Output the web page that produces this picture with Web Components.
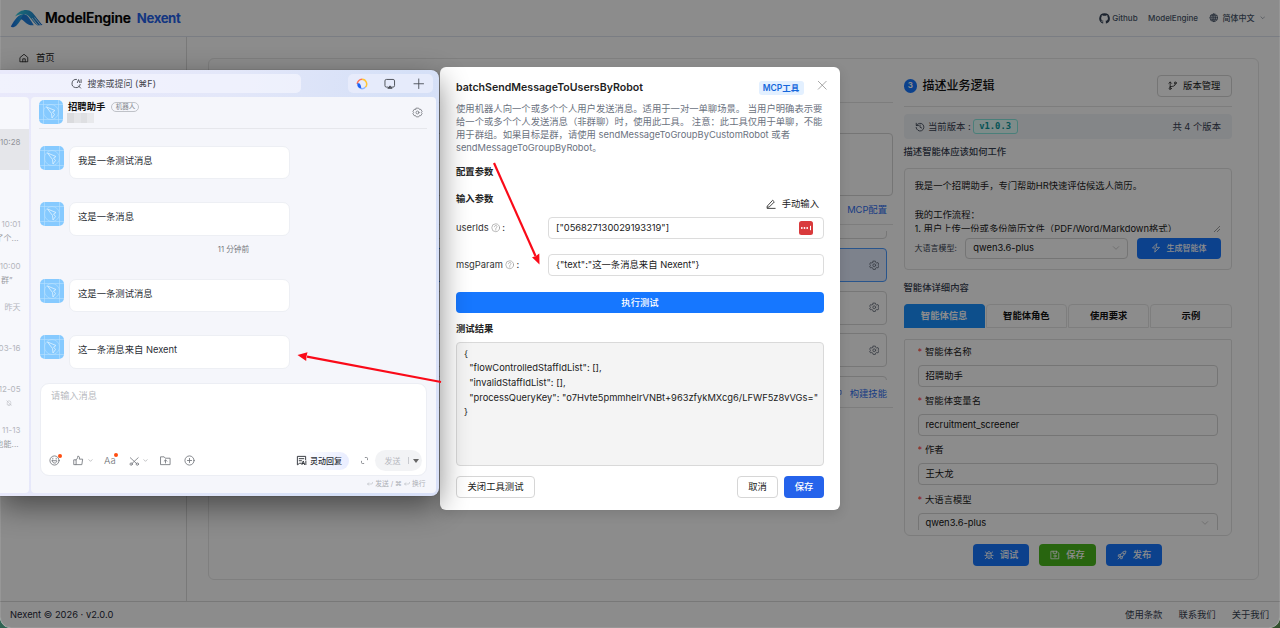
<!DOCTYPE html>
<html lang="zh-CN">
<head>
<meta charset="utf-8">
<title>Nexent</title>
<style>
html,body{margin:0;width:1280px;height:628px;overflow:hidden}
body{font-family:Inter,"Noto Sans CJK SC",sans-serif;font-size:9.33px;line-height:14px;color:#222}
</style>
</head>
<body>
<nexent-desktop></nexent-desktop>
<script>
const define = (name, css, html) => customElements.define(name, class extends HTMLElement {
  constructor() {
    super();
    const root = this.attachShadow({ mode: 'open' });
    const t = document.createElement('template');
    t.innerHTML = '<style>*{box-sizing:border-box}:host{box-sizing:border-box;display:block}' + css + '</style>' + (typeof html === 'function' ? html(this) : html);
    root.append(t.content.cloneNode(true));
  }
});

const ICONS = {
  home: '<path d="M3 10.5 12 3l9 7.500V21H3z"/><path d="M9 21v-7h6v7"/>',
  gear: '<path d="M9.500 2.500h5l.8 3 2.200 1.300 3-.9 2 4.100-2.200 2 0 0 2.200 2.100-2 4-3-.9-2.200 1.300-.8 3h-5l-.8-3-2.200-1.300-3 .9-2-4L3.700 12 1.500 10l2-4.100 3 .9 2.200-1.300z"/><circle cx="12" cy="12" r="3.200"/>',
  hexgear: '<path d="M9.300 2.500h5.400l1.500 2.700h3.200L22 10l-1.500 2 1.500 2-2.600 4.800h-3.200l-1.500 2.700H9.300l-1.500-2.700H4.600L2 14l1.500-2L2 10l2.600-4.800h3.200z"/><circle cx="12" cy="12" r="3.200"/>',
  globe: '<circle cx="12" cy="12" r="9.500"/><ellipse cx="12" cy="12" rx="4.500" ry="9.500"/><path d="M2.500 12h19M4 7h16M4 17h16M12 2.500v19"/>',
  down: '<path d="m4 8 8 8 8-8"/>',
  branch: '<circle cx="5.500" cy="19" r="2.500"/><circle cx="18.500" cy="5" r="2.500"/><path d="M5.500 16.500V3M2 6l3.500-3.500L9 6M5.500 14c8 0 13-1 13-6.500"/>',
  history: '<path d="M3.500 8.500A9.300 9.300 0 1 1 2.700 13M3 3v5.500h5.500M12 7v5.500l4 2"/>',
  bolt: '<path d="M13.500 2 3.500 12h7l-1.500 10 11.500-11.500h-7.500z"/>',
  close: '<path d="m3 3 18 18M21 3 3 21"/>',
  edit: '<path d="m4 16 12-13 4 4L8 19l-5 1zM3 22.500h19"/>',
  help: '<circle cx="12" cy="12" r="10"/><path d="M8.700 9.500c0-4.500 6.600-4.500 6.600-.3 0 2.300-3.300 2.500-3.300 5M12 16.500v1.500"/>',
  bug: '<path d="M7 8h10v8c0 6-10 6-10 0zM8 8c0-6 8-6 8 0M12 12v8M2 13h5M17 13h5M3 4.500 7 8M21 4.500 17 8M3 21l4.500-4M21 21l-4.500-4"/>',
  save: '<path d="M3 3h13.500L21 7.500V21H3zM7.500 3v5h8V3"/><circle cx="12" cy="14.500" r="2.700"/>',
  rocket: '<path d="M8 13C10 7 14 3 21.500 2.500 21 10 17 14 11 16zM8.500 11H4l-1.500 4L8 15M13 15.500V20l-4 1.500L9 16M7 17l-4.500 4.500"/><circle cx="15.500" cy="8.500" r="1.500"/>',
  searchai: '<path d="M12 3a9 9 0 1 0 8 11M16.500 17.500 21 22M14 10l2.500-6.500L19 10M22 3.500V10"/>',
  screen: '<path d="M8 19H5q-3 0-3-3V6q0-3 3-3h14q3 0 3 3v10q0 3-3 3h-3"/><path d="m12 17-4 4.500h8z" fill="currentColor"/>',
  plus: '<path d="M12 2v20M2 12h20"/>',
  smile: '<circle cx="12" cy="12" r="10"/><path d="M7 12.500h10c0 7-10 7-10 0zM8.300 7v2M15.700 7v2"/>',
  thumb: '<path d="M2.500 10.500h4.300V21H2.500zM6.800 10.500C10 8.500 10 6 10.500 2.500c4 0 4 3 3.300 6.500h7.200l-1.700 12H6.800"/>',
  cut: '<path d="m3 4 14 13M21 4 7 17"/><circle cx="5" cy="18.500" r="2.700"/><circle cx="19" cy="18.500" r="2.700"/>',
  folder: '<path d="M2 4h7l2.500 3H22v14H2zM12 17.500V11M9 13.500l3-3 3 3"/>',
  pluscircle: '<circle cx="12" cy="12" r="10"/><path d="M12 7.500v9M7.500 12h9"/>',
  reply: '<path d="M12 18H8l-5 3.500V3h18v7M7 8h10M7 12.500h5M13 21l2.800-8 2.800 8M14 18.500h3.500M21.500 13v8"/>',
  expand: '<path d="M14 4h3.500Q20 4 20 6.500V10M10 20H6.500Q4 20 4 17.500V14"/>',
  enter: '<path d="M7 7 2.500 12 7 17M2.500 12H17q5 0 5-4V6"/>',
  mute: '<path d="M5 18V10a7 7 0 0 1 14 0v8zM10 21.500h4M3 3l18 18"/>',
  wrench: '<path d="M4 4h15v10h-4l-2 8h-3l-2-8H4z"/>'
};
define('x-icon', ':host{display:inline-flex;flex:none;line-height:0}svg{display:block}', el => {
  const s = el.getAttribute('size') || 10, w = el.getAttribute('stroke') || 2;
  return `<svg width="${s}" height="${s}" viewBox="0 0 24 24" fill="none" stroke="currentColor" stroke-width="${w}" stroke-linejoin="round" stroke-linecap="round">${ICONS[el.getAttribute('name')]}</svg>`;
});

define('brand-logo', ':host{display:flex;align-items:center}.m{font:600 13.8px/20px Inter,sans-serif;color:#000;letter-spacing:-.12px;margin-left:2px;-webkit-text-stroke:.2px #000}.n{font:700 13.2px/20px Inter,sans-serif;color:#2563eb;margin-left:6px;letter-spacing:-.4px}svg{display:block;flex:none}',
`<svg width="33" height="21" viewBox="0 0 33 21"><defs><linearGradient id="a" x1="0" x2="1"><stop stop-color="#176be0"/><stop offset="1" stop-color="#2bb7e6"/></linearGradient><linearGradient id="b" x1="0" x2="1"><stop stop-color="#35d0dd"/><stop offset="1" stop-color="#1b6fd0"/></linearGradient></defs>
<path d="M5 8.500C8 4 12 2 16 2c5 0 7 3 10 7l6.500 8-5 .5C22 14 20 7 15 6.300 11 5.500 8 7 5 8.500z" fill="url(#b)"/><path d="M.8 18.500C5 11 9 5.500 15 6c-3 4-6 9-8.500 11.500-2 1.800-4.500 2.500-5.700 1z" fill="url(#a)"/><path d="M13 6.500c4-.8 6 3 8.500 7l2.300 3.700h-3.300C16 16.500 14 12 10.500 11z" fill="#1e7fdc"/><path d="m24.500 9.500 6 7.500M27 9.500l5 6.500M22 10l6 7.500" stroke="#fff" stroke-width=".7"/></svg><span class="m">ModelEngine</span><span class="n">Nexent</span>`);

define('app-header', ':host{display:flex;align-items:center;height:37px;flex:none;padding:0 15px 0 10px;border-bottom:1px solid #dfe3ee;justify-content:space-between}nav{display:flex;align-items:center;font-size:8px;font-weight:500;color:#475569;padding-top:0}nav span{white-space:nowrap}.gh{width:11px;height:11px;margin-right:2px}',
`<brand-logo></brand-logo><nav><svg class="gh" viewBox="0 0 24 24" fill="#334155"><path d="M12 .5a11.500 11.500 0 0 0-3.600 22.400c.6.1.8-.3.800-.6v-2.200c-3.200.7-3.900-1.400-3.900-1.400-.5-1.300-1.300-1.700-1.300-1.700-1-.7.1-.7.1-.7 1.200.1 1.800 1.200 1.800 1.200 1 1.800 2.700 1.300 3.400 1 .1-.8.4-1.300.7-1.600-2.600-.3-5.300-1.300-5.300-5.700 0-1.300.5-2.300 1.200-3.100-.1-.3-.5-1.500.1-3.100 0 0 1-.3 3.200 1.200a11 11 0 0 1 5.800 0c2.200-1.500 3.200-1.200 3.200-1.200.6 1.600.2 2.800.1 3.100.8.800 1.200 1.900 1.200 3.100 0 4.400-2.700 5.400-5.300 5.700.4.400.8 1.100.8 2.200v3.200c0 .3.200.7.800.6A11.500 11.500 0 0 0 12 .5z"/></svg><span>Github</span><span style="margin-left:10.500px">ModelEngine</span><x-icon name="globe" size="9.500" style="margin:0 4px 0 11px"></x-icon><span>简体中文</span><x-icon name="down" size="5.500" style="margin-left:5px"></x-icon></nav>`);

define('side-nav', ':host{width:187px;flex:none;border-right:1px solid #dcdcdc;padding:14px 0 0 19px}div{display:flex;align-items:center;height:14px;gap:7px;color:#222}', '<div><x-icon name="home" size="10"></x-icon><span>首页</span></div>');

define('app-footer', ':host{display:flex;height:27px;flex:none;border-top:1px solid #dadada;align-items:center;justify-content:space-between;padding:0 11px 0 10px;color:#374151}div{display:flex;gap:16px}.v{color:#1f2937}', '<span class="v">Nexent © 2026 · v2.0.0</span><div><span>使用条款</span><span>联系我们</span><span>关于我们</span></div>');

define('tool-row', ':host{height:34px;flex:none;margin-bottom:8.800px;border:1px solid #d9d9d9;border-radius:4px;display:flex;align-items:center;justify-content:flex-end;padding-right:6.500px;color:#6b7280}:host([selected]){background:#e3edff;border:1.500px solid #4b9bff}', '<x-icon name="gear" size="10.500"></x-icon>');

define('tool-column', `:host{flex:1;min-width:0;display:flex;flex-direction:column}
.head{height:28px;border-bottom:1px solid #e4e4e4}.box{margin-top:30px;height:63px;border:1px solid #d6d6d6;border-radius:4px}
.link{display:flex;align-items:center;justify-content:flex-end;color:#2f6ff0;padding-right:5.500px;gap:7px}
.a{height:29px;border-bottom:1px solid #e4e4e4}.list{height:149px;margin-top:6px;padding-right:6px;overflow:hidden;display:flex;flex-direction:column}.list tool-row:first-child{margin-top:-26px}.b{height:28px;border-bottom:1px solid #e4e4e4}`,
`<div class="head"></div><div class="box"></div><div class="link a"><x-icon name="wrench" size="9"></x-icon><span>MCP配置</span></div><div class="list"><tool-row></tool-row><tool-row selected></tool-row><tool-row></tool-row><tool-row></tool-row><tool-row></tool-row></div><div class="link b"><x-icon name="wrench" size="9"></x-icon><span>构建技能</span></div>`);

define('ui-button', `:host{display:flex;align-items:center;justify-content:center;gap:6px;height:21.500px;border-radius:4px;font-weight:500;color:#fff;background:#1677ff;white-space:nowrap}:host([kind=plain]){background:#fff;border:1px solid #d6d6d6;color:#222;font-weight:400}:host([kind=green]){background:#49b81d}:host([kind=deep]){background:#2563eb}`, '<slot></slot>');

define('ui-field', `.l{height:14px;display:flex;align-items:center;color:#222}.l i{color:#ff4d4f;font-style:normal;margin-right:3px;width:4.500px}.i{margin-top:6px;height:21.500px;border:1px solid #d6d6d6;border-radius:4px;padding:0 7px;display:flex;align-items:center;justify-content:space-between;color:#111}x-icon{color:#aaa;margin-right:1px}`,
 el => `<div class="l"><i>*</i><slot name="label"></slot></div><div class="i"><slot></slot>${el.hasAttribute('select') ? '<x-icon name="down" size="8" stroke="1.800"></x-icon>' : ''}</div>`);

define('logic-column', `:host{width:328px;flex:none;display:flex;flex-direction:column}
.head{height:32px;display:flex;align-items:flex-start;justify-content:space-between;border-bottom:1px solid #e4e4e4}
.t{display:flex;align-items:center;height:22px;gap:5.500px;font-size:12px;font-weight:500;color:#111}.t b{width:13.500px;height:13.500px;border-radius:50%;background:#1677ff;color:#fff;font-size:8px;line-height:13.500px;text-align:center}
.ver{margin-top:7px;height:25px;border-radius:4px;background:#f1f4f8;display:flex;align-items:center;padding:0 10.500px 0 11px;color:#374151}.tag{font:600 8.800px/13px "DejaVu Sans Mono",monospace;color:#08979c;height:15px;border:1px solid #87e8de;background:#e6fffb;border-radius:3px;padding:0 4px;margin-left:2px;width:45px;text-align:center}
h4{margin:0;font-size:9.330px;font-weight:500;color:#374151;height:14px;line-height:14px}
.desc{margin-top:9px;height:102px;border:1px solid #e2e2e2;border-radius:4px;padding:10px 10px 0}.ta{height:53px;line-height:14.600px;overflow:hidden;white-space:pre;color:#222;display:flex;justify-content:space-between}.rz{align-self:flex-end;width:6px;height:6px;margin-right:1px}
.row{margin-top:6px;display:flex;align-items:center;font-size:8px;color:#374151}.sel{margin-left:8.500px;width:163px;height:21px;border:1px solid #d6d6d6;border-radius:4px;padding:0 7px;display:flex;align-items:center;justify-content:space-between;font-size:9.330px;color:#111}.sel x-icon{color:#aaa}
.tabs{display:grid;grid-template-columns:repeat(4,1fr);gap:1px;margin-top:9px;height:24px}.tabs span{display:flex;align-items:center;justify-content:center;font-weight:700;color:#111;border:1px solid #e6e6e6;border-radius:4px 4px 0 0;font-weight:600}.tabs .on{background:#1890ff;border-color:#1890ff;color:#fff;border-bottom:0}
.form{margin-top:11px;height:197.500px;border:1px solid #e2e2e2;border-radius:2px 2px 6px 6px;padding:0 13px}.clip{height:190.500px;padding-top:5.500px;overflow:hidden;display:flex;flex-direction:column;gap:7.700px}
.acts{display:flex;justify-content:center;gap:10px;margin-top:8px}.acts ui-button{width:56.500px}`,
`<div class="head"><div class="t"><b>3</b><span>描述业务逻辑</span></div><ui-button kind="plain" style="width:75px"><x-icon name="branch" size="9.500"></x-icon><span>版本管理</span></ui-button></div>
<div class="ver"><x-icon name="history" size="10" style="margin-right:3.500px"></x-icon><span>当前版本 :</span><span class="tag">v1.0.3</span><span style="margin-left:auto">共 4 个版本</span></div>
<h4 style="margin-top:5.500px">描述智能体应该如何工作</h4>
<div class="desc"><div class="ta"><div>我是一个招聘助手，专门帮助HR快速评估候选人简历。

我的工作流程：
1. 用户上传一份或多份简历文件（PDF/Word/Markdown格式）</div><svg class="rz" viewBox="0 0 6 6" stroke="#888" stroke-width=".8"><path d="M0 6 6 0M3 6 6 3"/></svg></div>
<div class="row"><span>大语言模型:</span><div class="sel"><span>qwen3.6-plus</span><x-icon name="down" size="8" stroke="1.800"></x-icon></div><ui-button style="margin-left:auto;width:84px;height:21px"><x-icon name="bolt" size="10"></x-icon><span>生成智能体</span></ui-button></div></div>
<h4 style="margin-top:11px">智能体详细内容</h4>
<div class="tabs"><span class="on">智能体信息</span><span>智能体角色</span><span>使用要求</span><span>示例</span></div>
<div class="form"><div class="clip"><ui-field><span slot="label">智能体名称</span>招聘助手</ui-field><ui-field><span slot="label">智能体变量名</span>recruitment_screener</ui-field><ui-field><span slot="label">作者</span>王大龙</ui-field><ui-field select><span slot="label">大语言模型</span>qwen3.6-plus</ui-field></div></div>
<div class="acts"><ui-button><x-icon name="bug" size="10"></x-icon><span>调试</span></ui-button><ui-button kind="green"><x-icon name="save" size="10"></x-icon><span>保存</span></ui-button><ui-button><x-icon name="rocket" size="10"></x-icon><span>发布</span></ui-button></div>`);

define('app-shell', `:host{height:628px;display:flex;flex-direction:column;background:#fff;border-radius:0 0 11px 11px;overflow:hidden;position:relative}
.body{flex:1;min-height:0;display:flex}main{flex:1;padding:21px 21px 21px;display:flex;min-width:0}.card{flex:1;min-width:0;border:1px solid #e7e7e7;border-radius:6px;padding:16px 26.500px 0 26px;display:flex;gap:11px;align-items:flex-start}.mask{position:absolute;inset:0;background:rgba(0,0,0,.45);border:1px solid rgba(255,255,255,.09);border-top:0;border-radius:0 0 11px 11px}`,
`<app-header></app-header><div class="body"><side-nav></side-nav><main><div class="card"><tool-column></tool-column><logic-column></logic-column></div></main></div><app-footer></app-footer><div class="mask"></div>`);

define('test-modal', `:host{background:#fff;border-radius:6px;padding:14px 16px 0;display:flex;flex-direction:column;box-shadow:0 4px 12px rgba(0,0,0,.12)}
.head{display:flex;align-items:center;height:14px}.head b{font-size:10.600px;font-weight:600;flex:1;color:#1f1f1f}.chip{background:#e3f0ff;color:#1668dc;font-weight:600;font-size:8.500px;height:14px;border-radius:3px;width:45px;text-align:center;line-height:14px}
p{margin:6.500px 0 0;line-height:13.330px;color:#6b7280;white-space:nowrap}h5{margin:0;font-size:9.330px;font-weight:600;color:#222;height:14px;line-height:14px}
.in{display:flex;align-items:center;height:21.500px}.in label{width:92px;display:flex;align-items:center;gap:2px;color:#333;flex:none}.in label x-icon{color:#999}.in div{flex:1;height:21.500px;border:1px solid #dcdcdc;border-radius:4px;padding:0 10px 0 7px;display:flex;align-items:center;justify-content:space-between;color:#1a1a1a}
.key{width:14px;height:14px;background:#d93a3c;border-radius:2.500px}
pre{margin:6px 0 0;font:9.330px/14.650px Inter,sans-serif;height:124px;border:1px solid #d9d9d9;border-radius:4px;background:#f4f4f4;padding:4px 7px;color:#1a1a1a;white-space:pre}`,
`<div class="head"><b>batchSendMessageToUsersByRobot</b><span class="chip">MCP工具</span><x-icon name="close" size="10.500" stroke="1.700" style="color:#888;margin:-6px -3px 0 13px"></x-icon></div>
<p>使用机器人向一个或多个个人用户发送消息。适用于一对一单聊场景。 当用户明确表示要<br>给一个或多个个人发送消息（非群聊）时，使用此工具。 注意：此工具仅用于单聊，不能<br>用于群组。如果目标是群，请使用 sendMessageToGroupByCustomRobot 或者<br>sendMessageToGroupByRobot。</p>
<h5 style="margin-top:10.500px">配置参数</h5>
<div style="display:flex;justify-content:space-between;margin-top:13px;height:20px"><h5>输入参数</h5><span style="display:flex;align-items:center;gap:6px;margin:5px 5px 0 0;height:14px"><x-icon name="edit" size="10"></x-icon>手动输入</span></div>
<div class="in" style="margin-top:5px"><label>userIds<x-icon name="help" size="9.500" stroke="1.700"></x-icon> :</label><div><span>["056827130029193319"]</span><svg class="key" viewBox="0 0 14 14"><g fill="#fff"><circle cx="2.800" cy="7" r=".9"/><circle cx="5.500" cy="7" r=".9"/><circle cx="8.200" cy="7" r=".9"/><rect x="11" y="4.800" width="1" height="4.400"/></g></svg></div></div>
<div class="in" style="margin-top:15.500px"><label>msgParam<x-icon name="help" size="9.500" stroke="1.700"></x-icon> :</label><div><span>{"text":"这一条消息来自 Nexent"}</span></div></div>
<ui-button style="margin-top:16px;flex:none">执行测试</ui-button>
<h5 style="margin-top:8.500px">测试结果</h5>
<pre>{
  "flowControlledStaffIdList": [],
  "invalidStaffIdList": [],
  "processQueryKey": "o7Hvte5pmmheIrVNBt+963zfykMXcg6/LFWF5z8vVGs="
}</pre>
<div style="display:flex;gap:6px;margin-top:10.500px"><ui-button kind="plain" style="width:79px;margin-right:auto">关闭工具测试</ui-button><ui-button kind="plain" style="width:41px">取消</ui-button><ui-button kind="deep" style="width:40px">保存</ui-button></div>`);

define('robot-avatar', ':host{width:24px;height:24px;flex:none}svg{display:block}', `<svg width="24" height="24" viewBox="0 0 24 24"><rect width="24" height="24" rx="5" fill="#86caff"/><g fill="none" stroke="#b9e1ff" stroke-width=".6"><path d="M0 4.500h24M0 19.500h24M4.500 0v24M19.500 0v24"/><circle cx="12" cy="12" r="7.500"/><path d="m7.500 7 8.500 3.500-2.500 1.500 2 2.500-2.500 3.500-.5-4.500z" stroke="#dff2ff" stroke-width=".8"/></g></svg>`);

define('chat-message', ':host{display:flex;gap:5px;height:33.500px;align-items:flex-start}div{width:220.500px;height:33.500px;background:#fff;border:1px solid #edeff4;border-radius:7px;padding:7px 8px 0;color:#2b2f36}', '<robot-avatar></robot-avatar><div><slot></slot></div>');

define('chat-list', `:host{background:#f7f8fc;border-radius:0 4px 4px 0;padding-top:32px;overflow:hidden;color:#b4b6bc;font-size:8px}
div{height:41.200px;padding:6px 8.500px 0 0;display:flex;flex-direction:column;align-items:flex-end;white-space:nowrap}div span{height:14px;line-height:14px;flex:none}.s{background:#e5e6ea;color:#92949a}.g{color:#999ca2;margin-right:2px}`,
`<div class="s"><span>10:28</span></div><div></div><div><span>10:01</span><span class="g">了个...</span></div><div><span>10:00</span><span class="g" style="margin-right:8px">群”</span></div><div><span>昨天</span></div><div><span>03-16</span></div><div><span>12-05</span><x-icon name="mute" size="6" style="margin:4px 9px 0 0"></x-icon></div><div><span>11-13</span><span class="g">也能...</span></div>`);

define('chat-composer', `:host{height:93px;background:#fff;border:1px solid #eceef4;border-radius:9px;display:flex;flex-direction:column;justify-content:space-between;padding:5px 4px 4px 8px;color:#6f7278}.ph{color:#b8bac0;padding-left:2px;font-size:9.200px}
.bar{display:flex;align-items:center;height:21px}.dot{position:relative}.dot:after{content:"";position:absolute;width:4px;height:4px;border-radius:50%;background:#ff4d10;right:-2px;top:-1.500px}.dn{margin-left:4px}
.smart{margin-left:auto;display:flex;align-items:center;gap:3px;height:18px;padding:0 7px 0 3px;border-radius:9px;background:linear-gradient(90deg,#fff 10%,#e9edff);color:#2b2f36;font-weight:500;font-size:8px}.send{margin-left:6px;background:#f2f3f5;border-radius:11px;height:21px;width:47px;display:flex;align-items:center;padding-left:9.500px;font-size:8px;color:#b6b8be}.send i{width:1px;height:7px;background:#c8cacf;margin:0 4px 0 7px}.tri{border:3px solid transparent;border-top:4px solid #666;border-bottom:0}`,
`<span class="ph">请输入消息</span><div class="bar"><x-icon class="dot" name="smile" size="11" stroke="1.800"></x-icon><x-icon name="thumb" size="11" stroke="1.800" style="margin-left:13px"></x-icon><x-icon class="dn" name="down" size="5"></x-icon><span class="dot" style="margin-left:11px;font-size:9.500px;width:11.500px;line-height:12px;font-weight:300">Aa</span><x-icon name="cut" size="10.500" stroke="1.800" style="margin-left:13px"></x-icon><x-icon class="dn" name="down" size="5"></x-icon><x-icon name="folder" size="11" stroke="1.800" style="margin-left:12px"></x-icon><x-icon name="pluscircle" size="11" stroke="1.800" style="margin-left:13px"></x-icon>
<div class="smart"><x-icon name="reply" size="11"></x-icon><span>灵动回复</span></div><x-icon name="expand" size="9" style="margin-left:11px"></x-icon><div class="send">发送<i></i><span class="tri"></span></div></div>`);

define('chat-window', `:host{background:linear-gradient(100deg,#e9e9fb,#e3e7f9 45%,#d5e0f7 80%,#dae1f8);border-radius:0 8px 8px 0;box-shadow:0 10px 30px rgba(0,0,0,.48),0 0 1px rgba(0,0,0,.6);display:flex;flex-direction:column}
.top{height:27px;flex:none;display:flex;justify-content:space-between;padding:4px 6px 4px 0}.s{width:301px;background:rgba(243,244,253,.75);border-radius:0 5px 5px 0;display:flex;align-items:center;padding-left:70.500px;gap:6px;color:#3f434b;font-size:9px}
.ic{width:85px;background:rgba(236,240,252,.7);border-radius:5px;display:grid;grid-template-columns:1fr 1fr 1fr;place-items:center;color:#4c5058}.ic>*+*{border-left:0}
.cols{flex:1;display:flex;gap:2px;padding:0 2.500px 3px 0;min-height:0}chat-list{width:29px;flex:none}.p{flex:1;background:#f5f6fb;border-radius:4px;padding:3px 9px 0 8px;display:flex;flex-direction:column}
.h{height:29px;flex:none;border-bottom:1px solid #e6e7ec;display:flex;gap:5px}.h b{font-size:9.330px;font-weight:600;color:#111}.tg{font-size:6.500px;border:1px solid #bfc2c8;border-radius:6px;line-height:8px;height:10px;padding:0 3.500px;color:#84878e;margin-left:6px;width:28px;text-align:center;white-space:nowrap}
.mo{display:flex;margin-left:-1px;width:27px}.mo i{width:7px;height:10px}.time{height:14px;line-height:14px;text-align:center;font-size:7.700px;color:#797c82}.ft{display:flex;justify-content:flex-end;align-items:center;font-size:6.800px;color:#adb0b6;height:16px;gap:2px;padding-right:1.500px}`,
`<div class="top"><div class="s"><x-icon name="searchai" size="11" stroke="1.900"></x-icon><span>搜索或提问 (⌘F)</span></div><div class="ic"><svg width="12" height="12" viewBox="0 0 12 12" fill="none" stroke-width="1.500"><path d="M6 1.300A4.700 4.700 0 0 1 9.300 9.300" stroke="#ffc533"/><path d="M9.300 9.300A4.700 4.700 0 0 1 5 10.600" stroke="#8db4ff"/><path d="M6 1.300A4.700 4.700 0 0 0 1.300 6" stroke="#ff765b"/><path d="M1.200 5.500Q5 4 5.300 10.800 1.300 10.500 1.200 5.500z" fill="#1c61f5"/></svg><x-icon name="screen" size="11.500"></x-icon><x-icon name="plus" size="11.500" stroke="1.900"></x-icon></div></div>
<div class="cols"><chat-list></chat-list><div class="p">
<div class="h"><robot-avatar></robot-avatar><div style="flex:1;padding-top:0"><div style="display:flex;align-items:center;height:13px"><b>招聘助手</b><span class="tg">机器人</span></div><div class="mo"><i style="background:#dadbde"></i><i style="background:#e4e5e8"></i><i style="background:#dedfe2"></i><i style="background:#e8e9ec"></i></div></div><x-icon name="hexgear" size="11" stroke="1.800" style="color:#777a80;margin:7px 4.500px 0 0"></x-icon></div>
<div style="padding:16.500px 0 0 1px;flex:none"><chat-message>我是一条测试消息</chat-message><chat-message style="margin-top:23px">这是一条消息</chat-message><div class="time" style="margin-top:7px">11 分钟前</div><chat-message style="margin-top:22px">这是一条测试消息</chat-message><chat-message style="margin-top:23.300px">这一条消息来自 Nexent</chat-message></div>
<chat-composer style="margin:14.500px 0 0 1px;flex:none"></chat-composer><div class="ft"><x-icon name="enter" size="6"></x-icon><span>发送 / ⌘</span><x-icon name="enter" size="6"></x-icon><span>换行</span></div></div></div>`);

define('red-arrows', ':host{pointer-events:none}svg{display:block}', `<svg width="1280" height="628" fill="#fa0a18"><g stroke="#fa0a18" stroke-width="2.200"><path d="M494 163 535.500 256"/><path d="M441 382 307 356.700"/></g><path d="M539.500 264.500 532 257.300l3.500-1.100 3.800-2.600z"/><path d="M297.500 355 307.500 352.200 306.500 356.500 306.200 361z"/></svg>`);

define('nexent-desktop', `:host{position:relative;width:1280px;height:628px;overflow:hidden;background:linear-gradient(90deg,#2f6352 50%,#34502e 50%)}test-modal{position:absolute;left:440px;top:67px;width:400px;height:443px}chat-window{position:absolute;left:0;top:70px;width:438.500px;height:426px}red-arrows{position:absolute;inset:0}`,
 '<app-shell></app-shell><test-modal></test-modal><chat-window></chat-window><red-arrows></red-arrows>');
</script>
</body>
</html>
